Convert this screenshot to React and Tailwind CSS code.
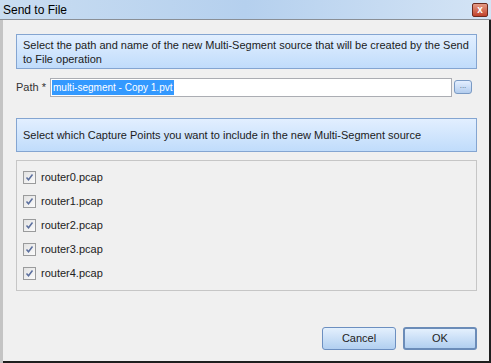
import React from "react";

function Check() {
  return (
    <span className="w-[13px] h-[13px] border border-[#9a9b9c] bg-gradient-to-br from-[#e2e2e2] to-[#fbfbfb] flex items-center justify-center shrink-0">
      <svg width="9" height="9" viewBox="0 0 9 9">
        <path d="M1.5 4.5 L3.5 6.8 L7.5 1.5" fill="none" stroke="#5b6f9e" strokeWidth="1.5" />
      </svg>
    </span>
  );
}

export default function App() {
  const items = ["router0.pcap", "router1.pcap", "router2.pcap", "router3.pcap", "router4.pcap"];
  return (
    <div className="w-[491px] h-[363px] bg-[#f0f0f0] flex flex-col overflow-hidden text-[11px] text-[#222]" style={{ fontFamily: '"Liberation Sans", Arial, sans-serif' }}>
      <div className="h-[19px] shrink-0 flex items-center justify-between bg-gradient-to-r from-[#c9ddf1] via-[#b5d0ee] to-[#d4e4f5] pl-[3px] pr-[3px]">
        <span className="text-[12px] text-black">Send to File</span>
        <span className="w-[16px] h-[14px] rounded-[2px] border border-[#6d2a1f] bg-gradient-to-b from-[#e49a85] to-[#c0402a] flex items-center justify-center text-white text-[10px] font-bold leading-none">x</span>
      </div>
      <div className="flex-1 flex border-t border-[#8a8f96]">
        <div className="w-[3px] bg-[#c4c4c4] shrink-0" />
        <div className="flex-1 flex flex-col border-b-2 border-[#1e1e1e] border-r-2 border-r-[#1e1e1e] pl-[13px] pr-[12px] pt-[14px] pb-[11px]">
          <div className="h-[35px] border border-[#84a5d1] bg-gradient-to-b from-[#e2efff] to-[#c0dcfb] px-[6px] pt-[3px] leading-[14px] text-[#1b1b1b]">
            Select the path and name of the new Multi-Segment source that will be created by the Send to File operation
          </div>
          <div className="flex items-center mt-[8px] h-[20px]">
            <span className="w-[34px] text-[#333]">Path *</span>
            <div className="w-[402px] h-[19px] border border-[#abadb3] bg-white flex items-center pl-[1px]">
              <span className="bg-[#3399ff] text-white text-[10px] leading-[15px] px-[1px]">multi-segment - Copy 1.pvt</span>
            </div>
            <span className="ml-[2px] w-[18px] h-[14px] rounded-[3px] border border-[#7a9ac4] bg-gradient-to-b from-[#e4efff] to-[#b3cdee] text-[8px] leading-[10px] text-[#4a5f80] flex justify-center">...</span>
          </div>
          <div className="h-[34px] mt-[21px] border border-[#84a5d1] bg-gradient-to-b from-[#e2efff] to-[#c0dcfb] px-[6px] flex items-center text-[#1b1b1b]">
            Select which Capture Points you want to include in the new Multi-Segment source
          </div>
          <div className="h-[131px] mt-[8px] border border-[#c6c6c6] flex flex-col gap-[10px] pl-[6px] pt-[9px]">
            {items.map((it) => (
              <div key={it} className="flex items-center gap-[5px] h-[14px]">
                <Check />
                <span className="text-[#222]">{it}</span>
              </div>
            ))}
          </div>
          <div className="flex-1" />
          <div className="flex justify-end gap-[7px]">
            <button className="w-[74px] h-[23px] rounded-[3px] border border-[#6c8fc0] bg-gradient-to-b from-[#e4f0fd] to-[#b1cff0] text-[#222]">Cancel</button>
            <button className="w-[74px] h-[23px] rounded-[3px] border-2 border-[#6b8cb8] bg-gradient-to-b from-[#e4f0fd] to-[#b1cff0] text-[#222]">OK</button>
          </div>
        </div>
      </div>
    </div>
  );
}
